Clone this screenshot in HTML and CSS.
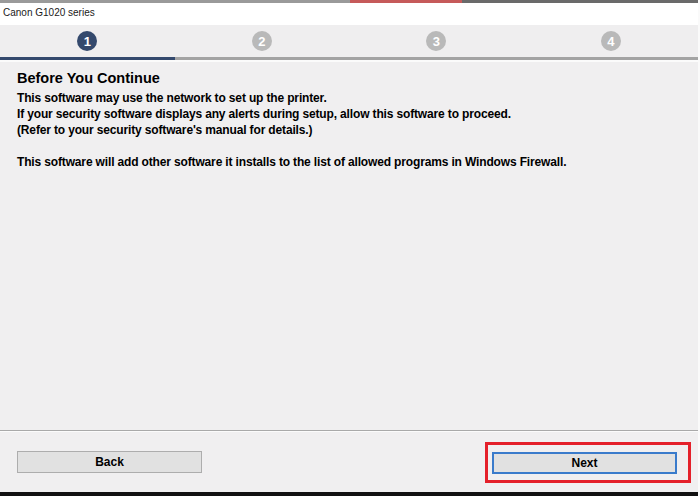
FILE: index.html
```html
<!DOCTYPE html>
<html>
<head>
<meta charset="utf-8">
<link rel="stylesheet" href="styles.css">
</head>
<body>
<div class="window">
  <div class="topstrip"><div class="redband"></div><div class="darkband"></div></div>
  <div class="titlebar">Canon G1020 series</div>
  <div class="steps">
    <div class="step"><span class="dot active">1</span></div>
    <div class="step"><span class="dot">2</span></div>
    <div class="step"><span class="dot">3</span></div>
    <div class="step"><span class="dot">4</span></div>
  </div>
  <div class="progress"><div class="progress-fill"></div></div>
  <div class="content">
    <h1 class="heading">Before You Continue</h1>
    <p class="para">This software may use the network to set up the printer.<br>If your security software displays any alerts during setup, allow this software to proceed.<br>(Refer to your security software's manual for details.)</p>
    <p class="para">This software will add other software it installs to the list of allowed programs in Windows Firewall.</p>
  </div>
  <div class="footer">
    <button class="btn">Back</button>
    <div class="highlight"><button class="btn btn-focus">Next</button></div>
  </div>
  <div class="bottomstrip"></div>
</div>
</body>
</html>
```
FILE: styles.css
```css
html, body {
  margin: 0;
  padding: 0;
  width: 700px;
  height: 496px;
  overflow: hidden;
  background: #f0eff0;
  font-family: "Liberation Sans", Arial, sans-serif;
}
.window {
  display: flex;
  flex-direction: column;
  height: 496px;
  border-right: 2px solid #fafafa;
  box-sizing: border-box;
}
.topstrip {
  height: 3px;
  background: #9a9a9a;
  display: flex;
  padding-left: 350px;
}
.redband {
  width: 112px;
  background: #c65a5a;
}
.darkband {
  flex: 1;
  background: #6a6a6a;
}
.titlebar {
  height: 22px;
  background: #ffffff;
  font-size: 10px;
  color: #1a1a1a;
  padding-left: 3px;
  line-height: 19px;
}
.steps {
  height: 32px;
  display: flex;
  background: #efeeef;
}
.step {
  flex: 1;
  display: flex;
  align-items: center;
  justify-content: center;
}
.dot {
  width: 20px;
  height: 20px;
  border-radius: 50%;
  background: #b9b9b9;
  color: #ffffff;
  font-size: 13px;
  font-weight: bold;
  display: flex;
  align-items: center;
  justify-content: center;
}
.dot.active {
  background: #34496d;
}
.progress {
  height: 3px;
  background: #a3a3a3;
  border-bottom: 2px solid #fbfbfb;
}
.progress-fill {
  width: 175px;
  height: 3px;
  background: #34496d;
}
.content {
  flex: 1;
  padding: 6px 17px 0;
  border-bottom: 1px solid #a9a9a9;
  color: #000;
}
.heading {
  margin: 0 0 2px;
  font-size: 14.5px;
  font-weight: bold;
  line-height: 20px;
}
.para {
  margin: 0 0 16px;
  font-size: 12px;
  letter-spacing: -0.15px;
  font-weight: bold;
  line-height: 16px;
}
.footer {
  height: 60px;
  display: flex;
  align-items: center;
  justify-content: space-between;
  padding: 0 7px 0 17px;
  border-top: 1px solid #fbfbfb;
}
.btn {
  width: 185px;
  height: 22px;
  background: #e1e1e1;
  border: 1px solid #adadad;
  font-family: "Liberation Sans", Arial, sans-serif;
  font-size: 12px;
  font-weight: bold;
  color: #000;
  padding: 0;
}
.btn-focus {
  border: 2px solid #3a7bcb;
}
.highlight {
  border: 3px solid #e4202a;
  padding: 7px 11px 6px 4px;
  display: flex;
}
.bottomstrip {
  height: 4px;
  background: #111;
}
```
